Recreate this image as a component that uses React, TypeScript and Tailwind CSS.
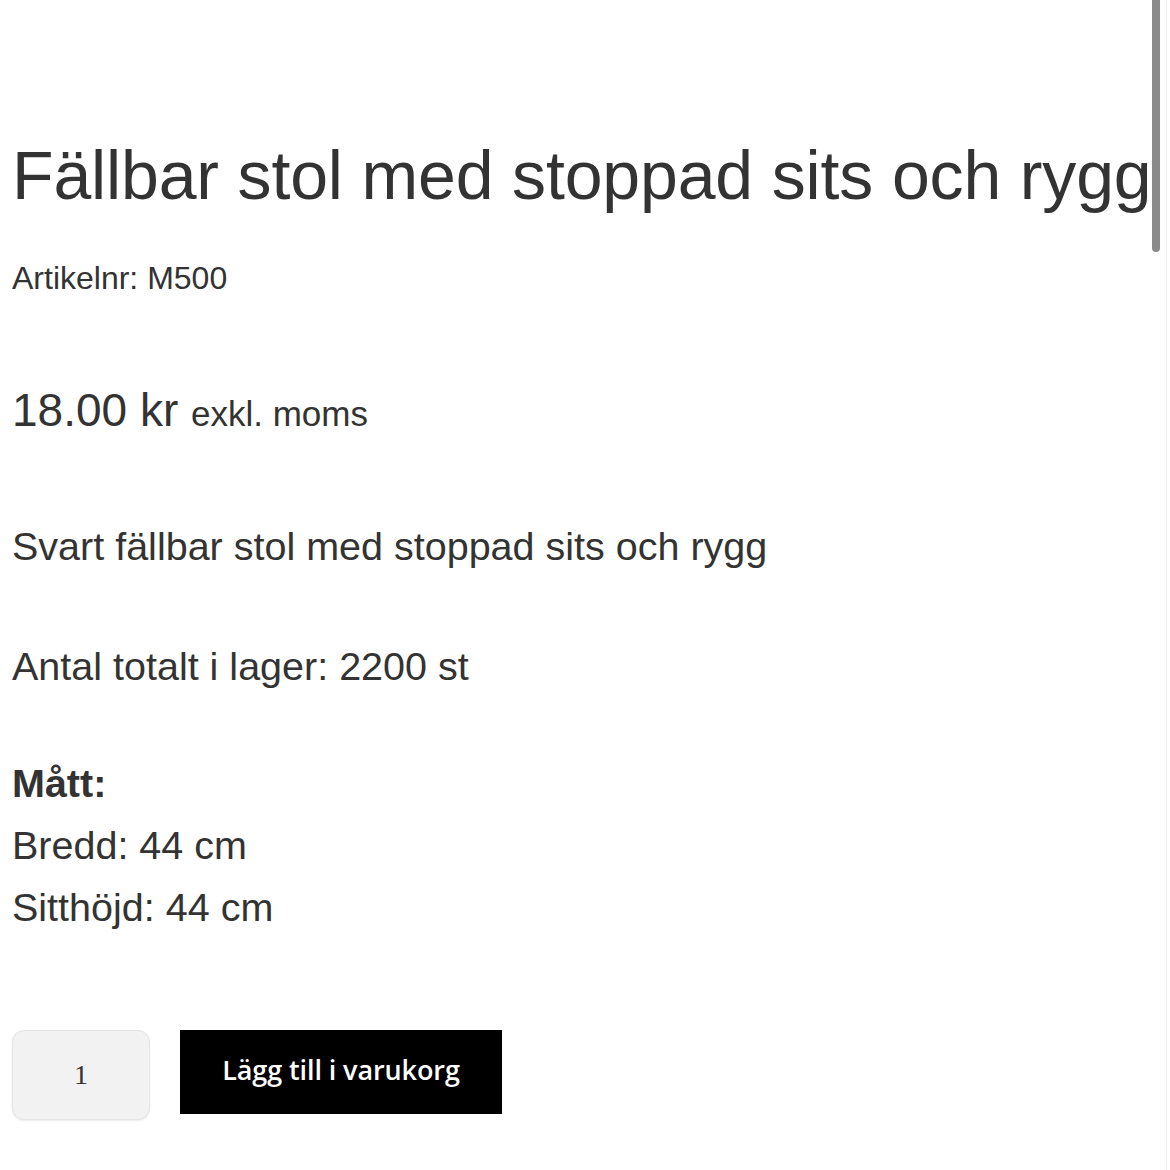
import React from 'react';

const specs = [
  { label: 'Bredd', value: '44 cm' },
  { label: 'Sitthöjd', value: '44 cm' },
];

export default function App() {
  return (
    <div className="relative min-h-[1170px] w-[1170px] overflow-hidden bg-white text-[#333] font-['Liberation_Sans',Arial,sans-serif]">
      {/* scrollbar */}
      <div className="absolute right-[10px] top-0 h-[252px] w-[8px] rounded-b-full bg-[#8a8a8a]" />
      <div className="absolute right-[3px] top-0 h-full w-px bg-[#f0f0f0]" />

      <div className="flex flex-col pl-[12px] pt-[135px]">
        <h1 className="text-[68px] leading-[80px] font-normal tracking-[-0.15px] text-[#333] whitespace-nowrap">
          Fällbar stol med stoppad sits och rygg
        </h1>

        <p className="mt-[43px] text-[32px] leading-[40px]">Artikelnr: M500</p>

        <p className="mt-[84px] text-[46px] leading-[56px]">
          18.00 kr <span className="text-[35px]">exkl. moms</span>
        </p>

        <p className="mt-[80px] text-[39.5px] leading-[48px]">Svart fällbar stol med stoppad sits och rygg</p>

        <p className="mt-[72px] text-[39.5px] leading-[48px]">Antal totalt i lager: 2200 st</p>

        <div className="mt-[62px] text-[39.5px] leading-[62px]">
          <p className="font-bold">Mått:</p>
          {specs.map((s) => (
            <p key={s.label}>
              {s.label}: {s.value}
            </p>
          ))}
        </div>

        <div className="mt-[92px] flex items-start gap-[30px]">
          <div className="flex h-[90px] w-[138px] items-center justify-center rounded-[12px] border border-[#e4e4e4] bg-[#f2f2f2] shadow-[0_1px_2px_rgba(0,0,0,0.08)] font-['Liberation_Serif',serif] text-[28px] text-[#333]">
            1
          </div>
          <button className="flex h-[84px] w-[322px] items-center justify-center bg-black pb-[4px] font-['Open_Sans',sans-serif] text-[27px] font-semibold tracking-[-0.1px] text-white">
            Lägg till i varukorg
          </button>
        </div>
      </div>
    </div>
  );
}
